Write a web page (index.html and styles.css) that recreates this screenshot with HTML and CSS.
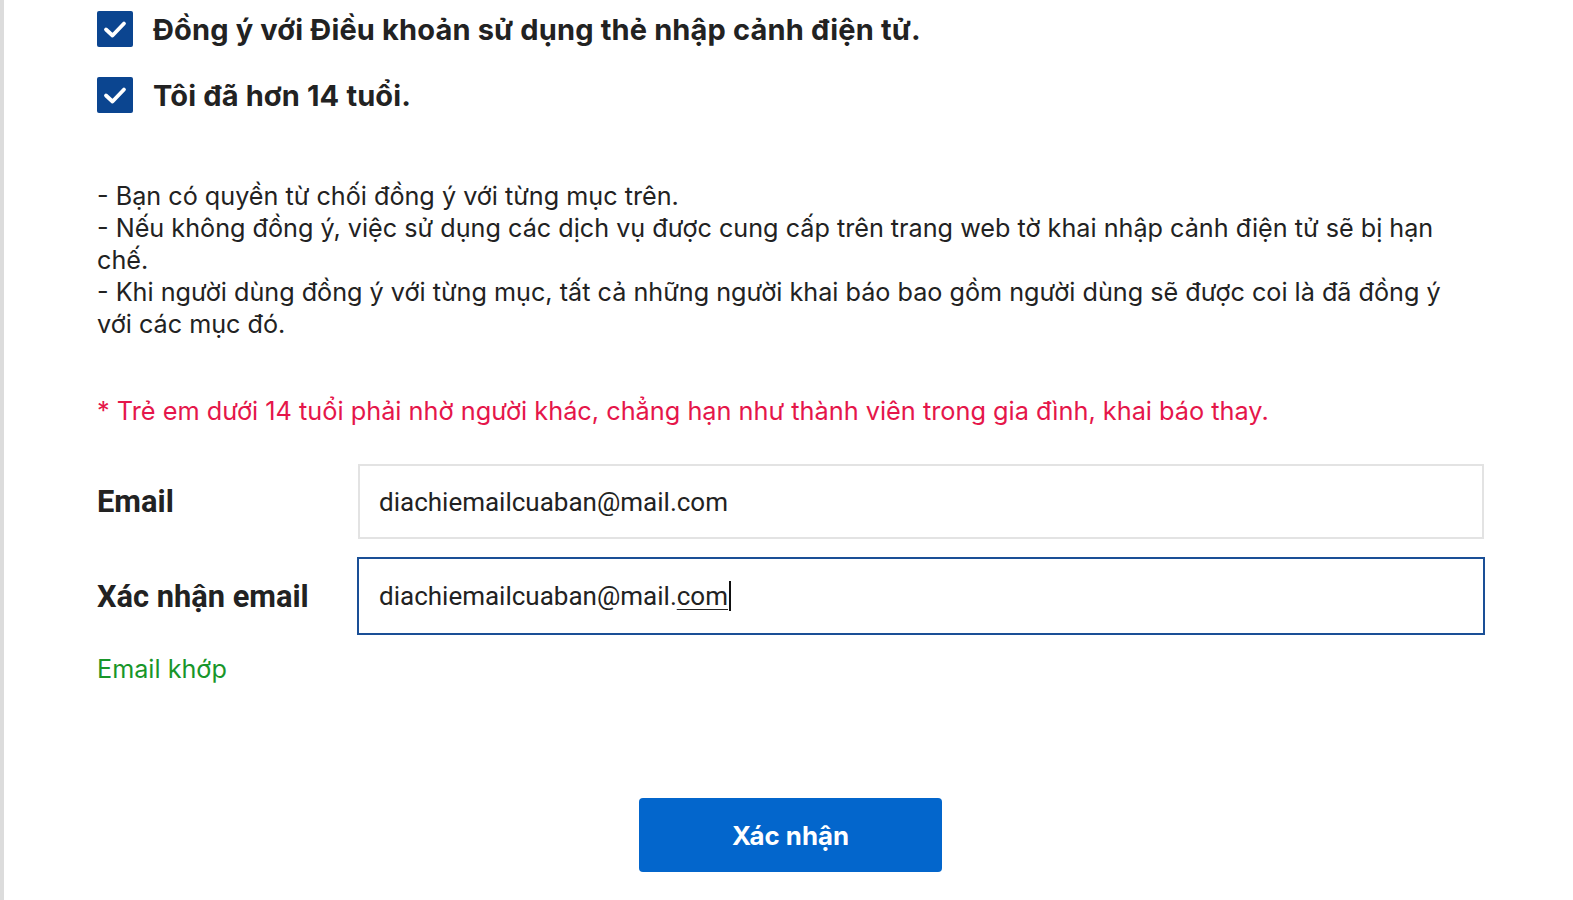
FILE: index.html
```html
<!DOCTYPE html>
<html lang="vi">
<head>
<meta charset="utf-8">
<title>Đồng ý</title>
<link rel="stylesheet" href="styles.css">
</head>
<body>
<div class="page">
  <div class="content">
    <div class="checks">
      <div class="check-row">
        <span class="box"><svg viewBox="0 0 36 36" width="36" height="36"><path d="M9 18.5 L15.5 24.5 L27 12.5" fill="none" stroke="#fff" stroke-width="3.8" stroke-linecap="round" stroke-linejoin="round"/></svg></span>
        <span class="check-label">Đồng ý với Điều khoản sử dụng thẻ nhập cảnh điện tử.</span>
      </div>
      <div class="check-row">
        <span class="box"><svg viewBox="0 0 36 36" width="36" height="36"><path d="M9 18.5 L15.5 24.5 L27 12.5" fill="none" stroke="#fff" stroke-width="3.8" stroke-linecap="round" stroke-linejoin="round"/></svg></span>
        <span class="check-label">Tôi đã hơn 14 tuổi.</span>
      </div>
    </div>

    <p class="notes">- Bạn có quyền từ chối đồng ý với từng mục trên.<br>- Nếu không đồng ý, việc sử dụng các dịch vụ được cung cấp trên trang web tờ khai nhập cảnh điện tử sẽ bị hạn chế.<br>- Khi người dùng đồng ý với từng mục, tất cả những người khai báo bao gồm người dùng sẽ được coi là đã đồng ý với các mục đó.</p>

    <p class="warn">* Trẻ em dưới 14 tuổi phải nhờ người khác, chẳng hạn như thành viên trong gia đình, khai báo thay.</p>

    <div class="form">
      <div class="field">
        <span class="field-label">Email</span>
        <div class="input">diachiemailcuaban@mail.com</div>
      </div>
      <div class="field">
        <span class="field-label">Xác nhận email</span>
        <div class="input focus">diachiemailcuaban@mail.<span class="ime">com</span><span class="caret"></span></div>
      </div>
    </div>

    <p class="match">Email khớp</p>

    <div class="actions">
      <button class="btn" type="button">Xác nhận</button>
    </div>
  </div>
</div>
</body>
</html>
```

FILE: styles.css
```css
html, body {
  margin: 0;
  padding: 0;
  background: #fff;
}
body {
  font-family: Inter, "Noto Sans", sans-serif;
  color: #222;
}
.page {
  border-left: 4px solid #dcdcdc;
  min-height: 900px;
  box-sizing: border-box;
}
.content {
  padding-left: 93px;
  width: 1387px;
}
.checks {
  padding-top: 11px;
  display: flex;
  flex-direction: column;
  gap: 30px;
}
.check-row {
  display: flex;
  align-items: center;
  gap: 20px;
  height: 36px;
}
.box {
  width: 36px;
  height: 36px;
  background: #0b4590;
  border-radius: 2px;
  display: block;
  flex: none;
}
.box svg { display: block; }
.check-label {
  font-size: 29px;
  font-weight: 700;
  color: #222;
  letter-spacing: 0.15px;
}
.notes {
  margin: 67px 0 0;
  max-width: 1365px;
  font-size: 25.2px;
  line-height: 32px;
  color: #222;
}
.warn {
  margin: 55px 0 0;
  font-size: 25.3px;
  line-height: 32px;
  color: #e5164a;
}
.form {
  margin-top: 37px;
  display: flex;
  flex-direction: column;
  gap: 18px;
}
.field {
  display: grid;
  grid-template-columns: 261px 1fr;
  align-items: center;
}
.field-label {
  font-family: Roboto, Inter, sans-serif;
  font-size: 30.8px;
  font-weight: 700;
  color: #222;
}
.input {
  height: 75px;
  box-sizing: border-box;
  border: 2px solid #e3e3e3;
  padding: 0 19px;
  display: flex;
  align-items: center;
  font-family: Roboto, Inter, sans-serif;
  font-size: 26px;
  color: #222;
}
.input.focus {
  height: 78px;
  border: 2px solid #1a4f96;
  margin-left: -1px;
  margin-right: -1px;
  padding-left: 20px;
}
.ime {
  text-decoration: underline;
  text-underline-offset: 4px;
  text-decoration-thickness: 1px;
}
.caret {
  display: inline-block;
  width: 2px;
  height: 30px;
  background: #111;
  margin-left: 1px;
}
.match {
  margin: 18px 0 0;
  font-size: 25.2px;
  line-height: 32px;
  color: #18962a;
}
.actions {
  margin-top: 113px;
  display: flex;
  justify-content: center;
}
.btn {
  width: 303px;
  height: 74px;
  border: none;
  border-radius: 4px;
  background: #0366cc;
  color: #fff;
  font-family: Inter, sans-serif;
  font-size: 25.8px;
  font-weight: 700;
  cursor: pointer;
}
```
